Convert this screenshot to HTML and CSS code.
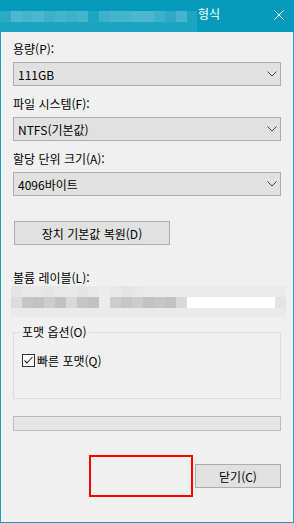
FILE: index.html
```html
<!DOCTYPE html>
<html lang="ko">
<head>
    <meta charset="UTF-8">
    <meta name="viewport" content="width=device-width, initial-scale=1.0">
    <title>형식</title>
    <link rel="stylesheet" href="styles.css">
</head>
<body>
    <div class="window">
        <div class="titlebar">
            <div class="title-blur">
                <div class="blur-row blur-top"></div>
                <div class="blur-row blur-mid">
                    <span class="b w11 t2"></span><span class="b w11 t5"></span><span class="b w11 t4"></span><span class="b w11 t5"></span>
                    <span class="b w11 t3"></span><span class="b w11 t4"></span><span class="b w11 t3"></span><span class="b w11 t4"></span>
                    <span class="b w11 t1"></span><span class="b w11 t3"></span><span class="b w11 t4"></span><span class="b w11 t4"></span>
                    <span class="b w11 t5"></span><span class="b w11 t5"></span><span class="b w11 t3"></span><span class="b w11 t2"></span>
                    <span class="b w11 t4"></span><span class="b w10 t1"></span>
                </div>
                <div class="blur-row blur-bot"></div>
            </div>
            <div class="title-text">형식</div>
            <div class="close">
                <svg width="10" height="10" viewBox="0 0 10 10"><path d="M0.5 0.5 L9.5 9.5 M9.5 0.5 L0.5 9.5" stroke="#fff" stroke-width="1" fill="none"/></svg>
            </div>
        </div>

        <div class="client">
            <div class="field">
                <div class="label">용량(P):</div>
                <div class="combo"><span>111GB</span><svg class="chev" width="10" height="6" viewBox="0 0 10 6"><path d="M0.5 0.5 L5 5 L9.5 0.5" stroke="#444" fill="none"/></svg></div>
            </div>
            <div class="field">
                <div class="label">파일 시스템(F):</div>
                <div class="combo"><span>NTFS(기본값)</span><svg class="chev" width="10" height="6" viewBox="0 0 10 6"><path d="M0.5 0.5 L5 5 L9.5 0.5" stroke="#444" fill="none"/></svg></div>
            </div>
            <div class="field">
                <div class="label">할당 단위 크기(A):</div>
                <div class="combo"><span>4096바이트</span><svg class="chev" width="10" height="6" viewBox="0 0 10 6"><path d="M0.5 0.5 L5 5 L9.5 0.5" stroke="#444" fill="none"/></svg></div>
            </div>

            <div class="btn btn-restore">장치 기본값 복원(D)</div>

            <div class="label label-volume">볼륨 레이블(L):</div>
            <div class="volume-blur">
                <div class="vrow vrow-1">
                    <span class="b w11 g2"></span><span class="b w11 g1"></span><span class="b w11 g1"></span><span class="b w11 g2"></span>
                    <span class="b w11 g1"></span><span class="b w11 g1"></span><span class="b w11 g2"></span><span class="b w11 g1"></span>
                    <span class="b w11 g0"></span><span class="b w11 g1"></span><span class="b w11 g2"></span><span class="b w11 g1"></span>
                </div>
                <div class="vrow vrow-2">
                    <span class="b w11 g3"></span><span class="b w11 g5"></span><span class="b w11 g6"></span><span class="b w11 g4"></span>
                    <span class="b w11 g6"></span><span class="b w11 g7"></span><span class="b w11 g5"></span><span class="b w11 g6"></span>
                    <span class="b w11 g0"></span><span class="b w11 g4"></span><span class="b w11 g5"></span><span class="b w11 g4"></span>
                    <span class="b w11 g6"></span><span class="b w11 g5"></span><span class="b w11 g6"></span><span class="b w11 g7"></span>
                    <span class="b white"></span><span class="b w11 g2"></span>
                </div>
                <div class="vrow vrow-3"></div>
            </div>

            <fieldset class="group">
                <legend>포맷 옵션(O)</legend>
                <label class="check-row">
                    <span class="checkbox">
                        <svg width="11" height="11" viewBox="0 0 11 11"><path d="M1.5 5.5 L4 8 L9.5 2" stroke="#222" stroke-width="1.1" fill="none"/></svg>
                    </span>
                    빠른 포맷(Q)
                </label>
            </fieldset>

            <div class="progress"></div>

            <div class="actions">
                <div class="marked"></div>
                <div class="btn btn-close">닫기(C)</div>
            </div>
        </div>
    </div>
</body>
</html>
```

FILE: styles.css
```css
body {
    margin: 0;
    font-family: "Noto Sans CJK KR", "Noto Sans", sans-serif;
    font-size: 12px;
    color: #000;
    background-color: #f0f0f0;
}
.window {
    width: 294px;
    height: 523px;
    display: flex;
    flex-direction: column;
}

/* 标题栏 */
.titlebar {
    height: 32px;
    flex: none;
    display: flex;
    background-color: #069bbd;
    color: #fff;
}
.title-blur {
    width: 197px;
    display: flex;
    flex-direction: column;
}
.blur-top {
    height: 11px;
}
.blur-mid {
    height: 11px;
    display: flex;
}
.blur-bot {
    height: 10px;
    background-color: #1ca4c3;
}
.b {
    display: block;
    height: 100%;
    flex: none;
}
.w11 { width: 11px; }
.w10 { width: 10px; }
.t1 { background-color: #1ea5c4; }
.t2 { background-color: #2eaac6; }
.t3 { background-color: #3db1cb; }
.t4 { background-color: #45b4cd; }
.t5 { background-color: #4cb7cf; }
.title-text {
    margin: 6px 0 0 1px;
    line-height: 16px;
}
.close {
    margin: 10px 10px 0 auto;
    height: 10px;
}
.close svg {
    display: block;
}

/* 内容区 */
.client {
    flex: 1;
    background-color: #f0f0f0;
    border: 1px solid #1a9fc1;
    border-top: none;
    padding: 9px 12px 0;
}
.label {
    line-height: 16px;
    margin-bottom: 5px;
    white-space: nowrap;
}
.field + .field {
    margin-top: 10px;
}
.combo {
    height: 24px;
    box-sizing: border-box;
    border: 1px solid #adadad;
    background-color: #e1e1e1;
    display: flex;
    align-items: center;
    justify-content: space-between;
    padding: 0 3px 0 4px;
}
.chev {
    display: block;
}
.btn {
    height: 24px;
    box-sizing: border-box;
    border: 1px solid #adadad;
    background-color: #e1e1e1;
    display: flex;
    align-items: center;
    justify-content: center;
    white-space: nowrap;
}
.btn-restore {
    width: 156px;
    margin: 25px 0 0 1px;
}
.label-volume {
    margin: 25px 0 0;
}

/* 模糊的卷标输入框 */
.volume-blur {
    width: 275px;
    margin-left: -2px;
}
.vrow {
    display: flex;
}
.vrow-1 {
    height: 11px;
    background-color: #eaeaea;
}
.vrow-2 {
    height: 11px;
    background-color: #e8e8e8;
}
.vrow-3 {
    height: 9px;
    background-color: #eaeaea;
}
.vrow-2 .b:first-child {
    background-color: #dcdcdc;
}
.white {
    width: 88px;
    background-color: #fff;
}
.g0 { background-color: #ececec; }
.g1 { background-color: #e8e8e8; }
.g2 { background-color: #e4e4e4; }
.g3 { background-color: #dcdcdc; }
.g4 { background-color: #cfcccd; }
.g5 { background-color: #c8c5c5; }
.g6 { background-color: #c4c1c2; }
.g7 { background-color: #d6dadc; }

/* 格式选项 */
.group {
    margin: 7px 0 0;
    padding: 0 8px 30px 6px;
    border: 1px solid #dcdcdc;
    min-width: 0;
}
.group legend {
    padding: 0 2px;
    line-height: 16px;
}
.check-row {
    display: flex;
    align-items: center;
    height: 16px;
    margin-top: 12px;
    margin-left: 2px;
    white-space: nowrap;
}
.checkbox {
    width: 13px;
    height: 13px;
    box-sizing: border-box;
    border: 1px solid #333;
    background-color: #fff;
    margin-right: 2px;
    display: flex;
    align-items: center;
    justify-content: center;
}
.checkbox svg {
    display: block;
}
.progress {
    height: 15px;
    box-sizing: border-box;
    margin-top: 17px;
    border: 1px solid #bcbcbc;
    background-color: #e6e6e6;
}
.actions {
    margin-top: 24px;
    display: flex;
    justify-content: flex-end;
    align-items: center;
    gap: 2px;
}
.marked {
    width: 104px;
    height: 42px;
    box-sizing: border-box;
    border: 2px solid #ff0000;
}
.btn-close {
    width: 86px;
}
```
